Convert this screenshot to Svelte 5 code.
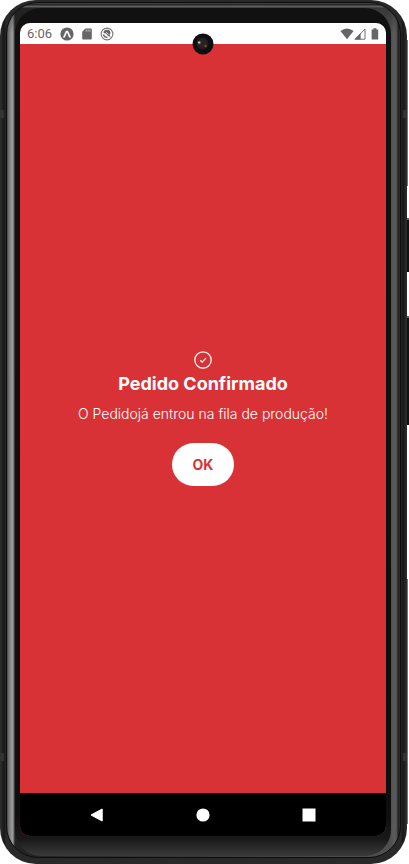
<script>
  let confirmed = $state(true);
</script>

<div class="stage">
  <i class="key power"></i>
  <i class="key volume"></i>
  <i class="edge upper"></i>
  <i class="edge lower"></i>
  <div class="phone">
    <i class="band top left"></i>
    <i class="band top right"></i>
    <i class="band bottom left"></i>
    <i class="band bottom right"></i>
    <div class="rim">
      <div class="bezel">
        <div class="screen">
          <svg class="camera" viewBox="0 0 22 22" aria-hidden="true">
            <circle cx="11" cy="11" r="10.5" fill="#0d0f10" />
            <circle cx="10.5" cy="10.5" r="6" fill="#201e1e" />
            <circle cx="10.5" cy="10.5" r="4" fill="#292321" />
            <circle cx="7.5" cy="9.5" r="1.8" fill="#5c514c" />
            <circle cx="7" cy="9.5" r=".9" fill="#d5d5d2" />
            <circle cx="13.5" cy="13" r="1.2" fill="#765024" />
          </svg>
          <header>
            <time>6:06</time>
            <svg class="s14" viewBox="0 0 14 14" aria-hidden="true">
              <circle cx="7" cy="7" r="6.6" fill="#666" />
              <path d="M4 9.8C5.6 8.3 5.6 4.4 7 4.4S8.4 8.3 10 9.8" fill="none" stroke="#fff" stroke-width="1.7" stroke-linecap="round" />
            </svg>
            <svg class="s10" viewBox="0 0 10 12" aria-hidden="true">
              <path d="M3.4.5H9q.8 0 .8.8v9.4q0 .8-.8.8H1q-.8 0-.8-.8V3.8z" fill="#666" />
              <path d="M4.2 1.6v2M6.1 1.6v2M8 1.6v2" stroke="#ddd" stroke-width=".8" />
            </svg>
            <svg class="s14" viewBox="0 0 14 14" aria-hidden="true">
              <circle cx="7" cy="7" r="5.9" fill="none" stroke="#777" stroke-width="1.1" />
              <path d="M3.5 6A3.5 3.5 0 0 1 10.5 6.5L9.4 7.5 11 10.8 7.4 8.2 5.7 6.5z" fill="#666" />
              <path d="M3.5 7.5Q4 10.4 7.5 10.5" fill="none" stroke="#666" stroke-width="1.4" />
              <path d="M6 5.4l2.4 1.8" stroke="#fff" stroke-width=".8" />
            </svg>
            <span class="gap"></span>
            <svg class="s14" viewBox="0 0 14 12" aria-hidden="true">
              <path d="M.4 3Q7-2.2 13.6 3L7 11.3z" fill="#666" />
            </svg>
            <svg class="s12" viewBox="0 0 12 12" aria-hidden="true">
              <path d="M11 1v10.2H1.2z" fill="none" stroke="#707070" stroke-width="1" />
              <path d="M.4 11.6L6.6 5v6.6z" fill="#666" />
            </svg>
            <svg class="s8" viewBox="0 0 8 12" aria-hidden="true">
              <path d="M2.4.3h3v1.2h1.8v10H.6v-10h1.8z" fill="#666" />
            </svg>
          </header>
          <main>
            {#if confirmed}
              <svg class="check" viewBox="0 0 18 18" fill="none" stroke="#fff" aria-hidden="true">
                <circle cx="9" cy="9" r="8.2" stroke-width="1.2" />
                <path d="M6.2 9.3l2 1.9 3.7-4" stroke-width="1.2" />
              </svg>
              <h1>Pedido Confirmado</h1>
              <p>O Pedidojá entrou na fila de produção!</p>
              <button class="ok" onclick={() => (confirmed = false)}>OK</button>
            {/if}
          </main>
          <nav>
            <button aria-label="Voltar">
              <svg viewBox="0 0 14 14"><path d="M12.2 1v12L1 7z" fill="#fff" stroke="#fff" stroke-linejoin="round" /></svg>
            </button>
            <button aria-label="Início">
              <svg viewBox="0 0 14 14"><circle cx="7" cy="7" r="6.6" fill="#fff" /></svg>
            </button>
            <button aria-label="Recentes">
              <svg viewBox="0 0 14 14"><path d="M.5.5h13v13H.5z" fill="#fff" /></svg>
            </button>
          </nav>
        </div>
      </div>
    </div>
  </div>
</div>

<style>
  :global(body) { margin: 0; background: #fff; }
  .stage {
    position: relative;
    box-sizing: border-box;
    height: 100vh;
    padding-right: 2px;
  }
  .key { position: absolute; right: 0; width: 6px; background: #111; border-top: 2px solid #666; box-sizing: border-box; }
  .power { top: 218px; height: 54px; }
  .volume { top: 316px; height: 109px; }
  .edge { position: absolute; right: 1px; width: 1px; background: #777; }
  .upper { top: 40px; height: 146px; }
  .lower { top: 579px; bottom: 40px; }
  .phone {
    position: relative;
    box-sizing: border-box;
    height: 100%;
    padding: 2px 6px 6px;
    border-radius: 36px;
    background: linear-gradient(90deg, #303030, #171717 4px, #292929 6px, #292929 calc(100% - 6px), #171717 calc(100% - 4px), #303030);
  }
  .band { position: absolute; width: 4px; height: 8px; background: #333; }
  .top { top: 110px; }
  .bottom { bottom: 103px; }
  .left { left: 0; }
  .right { right: 0; }
  .rim {
    box-sizing: border-box;
    height: 100%;
    padding: 5px 9px 1px 8px;
    border: 1px solid #0d0d0d;
    border-radius: 32px;
    background:
      linear-gradient(#4a4a4a, #1c1c1c 2px, #666 3px, #555 4px, #2228 5px, transparent 30px),
      linear-gradient(90deg, #444, #777 2px, #999 5px, #999 6px, #555 7px, #222 8px, #505050 calc(100% - 9px), #5c5c5c calc(100% - 6px), #505050 calc(100% - 3px), #1b1b1b calc(100% - 2px), #333);
  }
  .bezel {
    box-sizing: border-box;
    height: 100%;
    padding: 15px 5px 20px;
    border-radius: 26px;
    background: linear-gradient(#111 0, #0e0e0e 95%, #191919 98%, #3a3a3a);
  }
  .screen {
    position: relative;
    display: flex;
    flex-direction: column;
    height: 100%;
    overflow: hidden;
    border-radius: 10px;
    background: #d93236;
    font-family: Inter, "Liberation Sans", sans-serif;
  }
  .camera { position: absolute; top: 10px; left: 50%; width: 22px; height: 22px; margin-left: -11px; }
  header {
    display: flex;
    align-items: center;
    flex: none;
    height: 21px;
    padding: 0 7px;
    background: #fff;
  }
  time { width: 33px; color: #666; font: 13px/20px Roboto, sans-serif; }
  svg { display: block; flex: none; }
  .s14 { width: 14px; height: 14px; }
  .s12 { width: 12px; height: 12px; margin-right: 5px; }
  .s10 { width: 10px; height: 12px; margin: 0 8px; }
  .s8 { width: 8px; height: 12px; }
  .gap { flex: 1; }
  main {
    display: flex;
    flex: 1;
    flex-direction: column;
    align-items: center;
    justify-content: center;
    color: #fff;
    text-align: center;
  }
  .check { width: 18px; height: 18px; }
  h1 { margin: 0; font-size: 18px; font-weight: 700; line-height: 30px; }
  p { margin: 5px 0 19px; font-size: 14px; font-weight: 300; line-height: 20px; }
  button { border: 0; font-family: inherit; cursor: pointer; }
  .ok {
    padding: 12px 21px;
    border-radius: 22px;
    background: #fff;
    color: #d93236;
    font-size: 14px;
    font-weight: 700;
    line-height: 19px;
  }
  nav {
    display: flex;
    align-items: center;
    justify-content: center;
    flex: none;
    gap: 64px;
    height: 43px;
    background: #000;
  }
  nav button { padding: 14px; background: none; }
  nav svg { width: 14px; height: 14px; }
</style>
